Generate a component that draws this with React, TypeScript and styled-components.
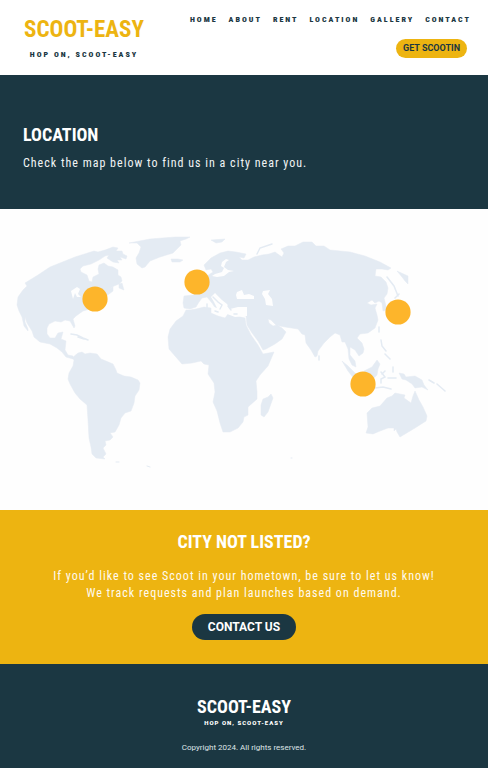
import React from "react";
import styled, { createGlobalStyle } from "styled-components";

const navy = "#1b3742";
const gold = "#edb411";
const land = "#e4ebf3";
const condensed = `"Roboto Condensed", Roboto, "Liberation Sans", sans-serif`;

const GlobalStyle = createGlobalStyle`
  *, *::before, *::after { box-sizing: border-box; }
  body {
    margin: 0;
    background: #fff;
    color: ${navy};
    font-family: Roboto, "Liberation Sans", sans-serif;
  }
  h1, h2, p, ul { margin: 0; padding: 0; }
`;

const Header = styled.header`
  display: flex;
  justify-content: space-between;
  align-items: flex-start;
  padding: 14px 17px 13px 24px;
`;

const Brand = styled.a<{ $small?: boolean }>`
  display: flex;
  flex-direction: column;
  align-items: center;
  gap: ${(p) => (p.$small ? 0 : 2)}px;
  color: inherit;
  text-decoration: none;
`;

const Wordmark = styled.span<{ $small?: boolean }>`
  font-family: ${condensed};
  font-weight: 700;
  font-size: ${(p) => (p.$small ? 18 : 23)}px;
  line-height: ${(p) => (p.$small ? 24 : 32)}px;
  color: ${(p) => (p.$small ? "#fff" : gold)};
`;

const Tagline = styled.span<{ $small?: boolean }>`
  font-family: ${(p) => (p.$small ? "inherit" : condensed)};
  font-weight: 900;
  font-size: ${(p) => (p.$small ? 6 : 8)}px;
  line-height: ${(p) => (p.$small ? 8 : 14)}px;
  letter-spacing: ${(p) => (p.$small ? 1 : 2)}px;
`;

const HeaderSide = styled.div`
  display: flex;
  flex-direction: column;
  align-items: flex-end;
  gap: 13px;
`;

const NavList = styled.ul`
  display: flex;
  gap: 11px;
  list-style: none;
`;

const NavLink = styled.a`
  display: block;
  color: ${navy};
  font-family: ${condensed};
  font-size: 8px;
  font-weight: 900;
  line-height: 12px;
  letter-spacing: 2px;
  text-decoration: none;
`;

const PillButton = styled.button<{ $large?: boolean }>`
  border: 0;
  border-radius: 999px;
  cursor: pointer;
  font-family: inherit;
  font-weight: 700;
  font-size: ${(p) => (p.$large ? 12 : 9)}px;
  line-height: ${(p) => (p.$large ? 18 : 13)}px;
  padding: ${(p) => (p.$large ? "4px 16px" : "3px 7px")};
  color: ${(p) => (p.$large ? "#fff" : navy)};
  background: ${(p) => (p.$large ? navy : gold)};
`;

const HeaderAction = styled.div`
  display: flex;
  padding-right: 4px;
`;

const Hero = styled.section`
  background: ${navy};
  color: #fff;
  padding: 44px 23px 37px;
`;

const Title = styled.h1`
  font-family: ${condensed};
  font-size: 18px;
  font-weight: 700;
  line-height: 32px;
`;

const Copy = styled.p`
  font-family: ${condensed};
  font-size: 12px;
  line-height: 17px;
  letter-spacing: 1px;
  color: #f1f4f5;
`;

const HeroCopy = styled(Copy)`
  margin-top: 4px;
`;

const MapSection = styled.section`
  background: #fefefe;
`;

const WorldMap = styled.svg`
  display: block;
  width: 100%;
  height: auto;
`;

const CallOut = styled.section`
  display: flex;
  flex-direction: column;
  align-items: center;
  background: ${gold};
  color: #fff;
  text-align: center;
  padding: 16px 24px 24px;
`;

const CallOutCopy = styled(Copy)`
  margin: 10px 0 12px;
  color: #fffaf0;
`;

const Footer = styled.footer`
  display: flex;
  flex-direction: column;
  align-items: center;
  gap: 16px;
  background: ${navy};
  color: #fff;
  padding: 31px 24px 15px;
`;

const Copyright = styled.p`
  font-size: 8px;
  line-height: 10px;
  color: #dfe5e7;
`;

const links = ["Home", "About", "Rent", "Location", "Gallery", "Contact"];

const landmasses = [
  // North and Central America
  "25,283 38,275 50,267 75,257 94,251 98,252 105,250 113,247 118,248 116,251 122,251 123,254 127,256 126,259 120,257 122,260 117,260 119,263 113,262 107,258 109,255 105,256 99,260 91,264 83,266 80,269 81,272 87,275 89,281 92,282 93,277 99,274 98,269 99,265 104,263 108,266 113,267 118,270 118,275 121,277 122,281 119,284 114,286 108,290 113,287 113,291 109,294 103,298 97,304 90,309 83,311 76,316 73,319 75,326 74,328 70,321 65,320 61,322 55,321 49,324 47,328 47,334 50,338 55,338 58,333 63,332 61,339 66,341 65,350 68,355 73,356 73,359 66,357 62,352 57,348 50,344 40,342 34,337 32,331 27,323 25,317 25,322 28,329 28,331 24,326 22,317 19,311 17,305 18,297 23,290 27,286",
  // Newfoundland
  "119,284 122,283 124,290 119,288",
  // South America
  "72,358 78,353 82,352 85,354 90,353 97,354 101,359 106,361 113,364 116,370 117,373 124,376 131,377 138,380 140,383 139,390 135,396 134,403 131,411 125,413 121,418 119,425 115,432 110,433 113,437 110,440 105,441 106,445 103,448 106,454 103,457 105,459 96,458 92,454 91,447 89,438 88,420 87,405 80,399 75,393 70,384 68,379 69,373 73,366 74,360",
  // Greenland
  "129,243 150,239 175,237 190,237 186,239 180,241 181,245 177,249 173,253 160,257 150,261 145,267 142,268 137,264 136,258 139,253 141,247 137,243",
  // Iceland
  "171,259 178,259 183,260 180,262 172,262",
  // Svalbard
  "211,240 225,239 222,242 216,243",
  // Europe and Asia
  "204,265 211,258 220,253 228,251 236,252 246,254 244,258 239,257 242,260 248,260 254,257 262,255 269,254 275,252 282,257 284,253 281,249 288,246 295,246 303,242 312,242 316,246 324,246 330,250 350,252 365,256 380,262 391,268 388,270 382,269 376,269 375,276 381,277 386,282 388,288 387,294 384,298 387,310 383,311 382,303 379,301 375,303 372,300 367,303 371,305 377,304 375,308 377,315 378,320 375,328 368,333 360,334 357,338 362,343 364,349 363,353 359,356 355,350 350,347 350,355 355,361 356,367 352,365 349,359 348,349 345,342 342,342 340,335 335,333 330,337 324,343 318,351 317,356 315,357 311,350 306,343 305,335 302,334 298,329 285,327 280,326 276,325 271,320 268,319 269,323 273,326 277,325 282,328 286,332 282,339 275,344 266,349 263,350 258,341 252,333 247,325 246,316 241,315 234,315 230,312 225,309 219,304 214,298 219,306 216,309 212,303 207,297 202,298 199,302 196,307 190,309 184,308 183,303 184,296 193,295 196,293 193,289 199,285 206,281 207,276 213,272 211,269 206,270",
  // Africa
  "186,310 183,316 176,321 170,329 168,337 169,349 175,356 182,364 192,363 201,361 204,364 209,365 208,374 214,383 215,392 213,402 217,411 220,423 223,432 230,432 238,428 243,422 244,417 248,415 248,407 257,399 257,392 256,381 260,375 268,366 274,352 263,354 258,345 251,335 246,325 245,318 237,316 228,314 225,318 218,316 211,313 211,308 204,307 196,309 190,310",
  // Madagascar
  "271,394 273,398 268,412 264,417 261,415 261,405 263,399 268,397",
  // Australia
  "367,413 372,408 380,406 387,398 392,396 395,393 400,394 405,395 404,398 411,403 413,396 415,391 419,400 423,407 427,416 426,421 415,428 400,437 397,432 396,429 394,431 394,428 388,428 380,431 373,434 366,433 368,427",
  // New Guinea
  "399,373 404,374 406,377 415,376 422,380 424,385 428,390 422,387 415,388 412,384 406,380 402,379",
  // Borneo
  "364,371 372,367 377,360 380,364 378,369 377,375 373,379 366,376",
  // Sumatra
  "342,361 348,366 356,374 360,382 355,380 348,371",
  // Kamchatka
  "397,271 408,276 408,284 405,281 402,277",
];

const inlandWaters = [
  // Baltic
  "226,259 222,262 221,266 224,268 222,272 215,274 212,276 217,277 224,276 229,272 234,271 228,270 224,267 226,262 229,260",
  // Black Sea
  "237,292 242,290 244,295 249,294 254,296 254,299 246,299 237,299 236,295",
  // Caspian
  "263,291 270,290 268,294 272,299 273,306 266,305 265,299 262,294",
  // Mediterranean
  "211,297 215,293 222,300 227,304 230,309 238,307 247,307 247,316 235,317 222,312 213,311 211,306 217,308 214,302",
  // Great Lakes
  "71,291 77,287 80,289 78,294 81,297 77,297 75,293 73,299",
];

const coastDetails =
  "M71 334l6 1l6 3l5 2M78 337l6 2M381 340l1 6l4 5M385 354l5 5M379 327v5M319 356v4M375 388l8-1l8 2M381 372l4 5l-4 2v4M385 371l-3 3M388 378h8M393 367v5M429 380l5 3M437 384l8 7M387 277l7 9l4 10M395 298l4-4";

// Italy, Greece and Crete
const mediterraneanDetails = "M213 297l5 5l4 3l-2 4M215 311l3 1M228 306l3 4M234 314h3M207 304v4";

// Falklands, South Georgia and Kerguelen
const southernIslands = "M116 462h3M147 466l3 1M291 458h1";

const pins = [
  { city: "New York", x: 95, y: 299 },
  { city: "London", x: 197, y: 282 },
  { city: "Yokohama", x: 398, y: 312 },
  { city: "Jakarta", x: 363, y: 384 },
];

export default function App() {
  return (
    <>
      <GlobalStyle />
      <Header>
        <Brand href="#home">
          <Wordmark>SCOOT-EASY</Wordmark>
          <Tagline>HOP ON, SCOOT-EASY</Tagline>
        </Brand>
        <HeaderSide>
          <nav>
            <NavList>
              {links.map((label) => (
                <li key={label}>
                  <NavLink href={`#${label.toLowerCase()}`}>{label.toUpperCase()}</NavLink>
                </li>
              ))}
            </NavList>
          </nav>
          <HeaderAction>
            <PillButton type="button">GET SCOOTIN</PillButton>
          </HeaderAction>
        </HeaderSide>
      </Header>
      <main>
        <Hero>
          <Title>LOCATION</Title>
          <HeroCopy>Check the map below to find us in a city near you.</HeroCopy>
        </Hero>
        <MapSection>
          <WorldMap viewBox="0 209 488 301" aria-hidden="true">
            <g fill={land} stroke={land} strokeWidth="0.5" strokeLinejoin="round">
              {landmasses.map((points) => (
                <polygon key={points} points={points} />
              ))}
            </g>
            <g fill="#fefefe">
              {inlandWaters.map((points) => (
                <polygon key={points} points={points} />
              ))}
            </g>
            <g fill="none" stroke={land} strokeWidth="1.5" strokeLinecap="round">
              <path d={coastDetails} />
              <path d={mediterraneanDetails} />
              <path d="M257 254l3-6l12-4" />
              <path d={southernIslands} strokeWidth="1" />
            </g>
            {pins.map((pin) => (
              <circle key={pin.city} cx={pin.x} cy={pin.y} r="12.6" fill="#fdb52b" />
            ))}
          </WorldMap>
        </MapSection>
        <CallOut>
          <Title as="h2">CITY NOT LISTED?</Title>
          <CallOutCopy>
            If you’d like to see Scoot in your hometown, be sure to let us know!
            <br />
            We track requests and plan launches based on demand.
          </CallOutCopy>
          <PillButton type="button" $large>
            CONTACT US
          </PillButton>
        </CallOut>
      </main>
      <Footer>
        <Brand href="#home" $small>
          <Wordmark $small>SCOOT-EASY</Wordmark>
          <Tagline $small>HOP ON, SCOOT-EASY</Tagline>
        </Brand>
        <Copyright>Copyright 2024. All rights reserved.</Copyright>
      </Footer>
    </>
  );
}
